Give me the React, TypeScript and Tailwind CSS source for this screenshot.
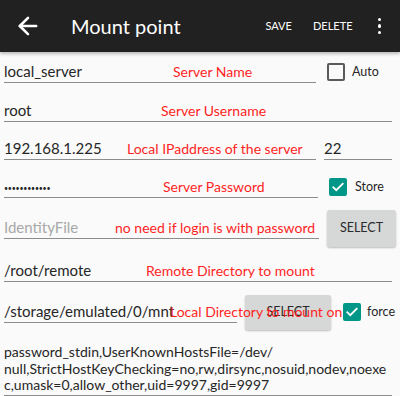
import { ArrowLeft } from 'lucide-react'

const APP_FONT = { fontFamily: 'Lato, "Open Sans", sans-serif' }

// red annotations drawn over the screenshot
function Note({ left, children }: { left: number; children: string }) {
    return (
        <span
            className="absolute top-1/2 -translate-y-1/2 whitespace-nowrap text-[14px] leading-none text-[#ff1f1f] pointer-events-none"
            style={{ left: left - 4, fontFamily: 'Lato, sans-serif' }}
        >
            {children}
        </span>
    )
}

function Field({ w, children, muted }: { w: string; children: React.ReactNode; muted?: boolean }) {
    return (
        <div className={`${w} h-[22px] border-b border-[#8c8c8c] pb-[1px] text-[15px] leading-[20px] whitespace-nowrap ${muted ? 'text-[#a8a8a8]' : 'text-[#262626]'}`}>
            {children}
        </div>
    )
}

function Check({ on }: { on?: boolean }) {
    if (on) {
        return (
            <div className="w-[18px] h-[18px] rounded-[2px] bg-[#009688] flex items-center justify-center">
                <svg width="14" height="14" viewBox="0 0 24 24" fill="none" stroke="white" strokeWidth="3.2" strokeLinecap="square">
                    <path d="M4 12.5l5 5L20 6.5" />
                </svg>
            </div>
        )
    }
    return <div className="w-[18px] h-[18px] rounded-[2px] border-2 border-[#5a5a5a]" />
}

function SelectBtn({ w, h }: { w: string; h: string }) {
    return (
        <button className={`${w} ${h} rounded-[3px] bg-[#d6d7d7] shadow-[0_1px_2px_rgba(0,0,0,0.25)] text-[12.5px] text-[#2a2a2a]`}>
            SELECT
        </button>
    )
}

export default function App() {
    return (
        <div className="w-[400px] h-[396px] overflow-hidden bg-[#fafafa]" style={APP_FONT}>
            {/* Toolbar */}
            <div className="relative h-[52px] bg-[#212121] flex items-center text-white shadow-[0_2px_3px_rgba(0,0,0,0.25)] z-10">
                <ArrowLeft size={28} strokeWidth={2.2} className="ml-[14px]" />
                <span className="ml-[29px] text-[20px] leading-none">Mount point</span>
                <span className="ml-auto text-[11px]">SAVE</span>
                <span className="ml-[21px] text-[11px]">DELETE</span>
                <div className="ml-[25px] mr-[19px] flex flex-col gap-[3px]">
                    <div className="w-[3.5px] h-[3.5px] rounded-full bg-white" />
                    <div className="w-[3.5px] h-[3.5px] rounded-full bg-white" />
                    <div className="w-[3.5px] h-[3.5px] rounded-full bg-white" />
                </div>
            </div>

            <div className="pl-[4px]">
                {/* Server name */}
                <div className="relative h-[40px] flex items-center">
                    <Field w="w-[312px]">local_server</Field>
                    <div className="ml-[11px]"><Check /></div>
                    <span className="ml-[7px] text-[12.5px] text-[#262626]">Auto</span>
                    <Note left={173}>Server Name</Note>
                </div>

                {/* Username */}
                <div className="relative h-[38px] flex items-center">
                    <Field w="w-[388px]">root</Field>
                    <Note left={161}>Server Username</Note>
                </div>

                {/* Host + port */}
                <div className="relative h-[38px] flex items-center">
                    <Field w="w-[312px]">192.168.1.225</Field>
                    <div className="ml-[8px]"><Field w="w-[68px]">22</Field></div>
                    <Note left={127}>Local IPaddress of the server</Note>
                </div>

                {/* Password */}
                <div className="relative h-[38px] flex items-center">
                    <Field w="w-[314px]">
                        <span className="text-[7px] tracking-[-0.2px] align-middle">••••••••••••</span>
                    </Field>
                    <div className="ml-[11px]"><Check on /></div>
                    <span className="ml-[8px] text-[12.5px] text-[#262626]">Store</span>
                    <Note left={163}>Server Password</Note>
                </div>

                {/* Identity file */}
                <div className="relative h-[44px] flex items-center">
                    <Field w="w-[315px]" muted>IdentityFile</Field>
                    <div className="ml-[8px]"><SelectBtn w="w-[69px]" h="h-[37px]" /></div>
                    <Note left={115}>no need if login is with password</Note>
                </div>

                {/* Remote dir */}
                <div className="relative h-[42px] flex items-center">
                    <Field w="w-[388px]">/root/remote</Field>
                    <Note left={146}>Remote Directory to mount</Note>
                </div>

                {/* Local dir */}
                <div className="relative h-[40px] flex items-center">
                    <Field w="w-[233px]">/storage/emulated/0/mnt</Field>
                    <div className="ml-[8px]"><SelectBtn w="w-[86px]" h="h-[35px]" /></div>
                    <div className="ml-[12px]"><Check on /></div>
                    <span className="ml-[6px] text-[12.5px] text-[#262626]">force</span>
                    <Note left={170}>Local Directory to mount on</Note>
                </div>

                {/* Options */}
                <div className="pt-[12px] w-[388px]">
                    <div className="border-b border-[#8c8c8c] pb-[1px] text-[14px] leading-[16.5px] text-[#262626] whitespace-nowrap">
                        <div>password_stdin,UserKnownHostsFile=/dev/</div>
                        <div>null,StrictHostKeyChecking=no,rw,dirsync,nosuid,nodev,noexe</div>
                        <div>c,umask=0,allow_other,uid=9997,gid=9997</div>
                    </div>
                </div>
            </div>
        </div>
    )
}
